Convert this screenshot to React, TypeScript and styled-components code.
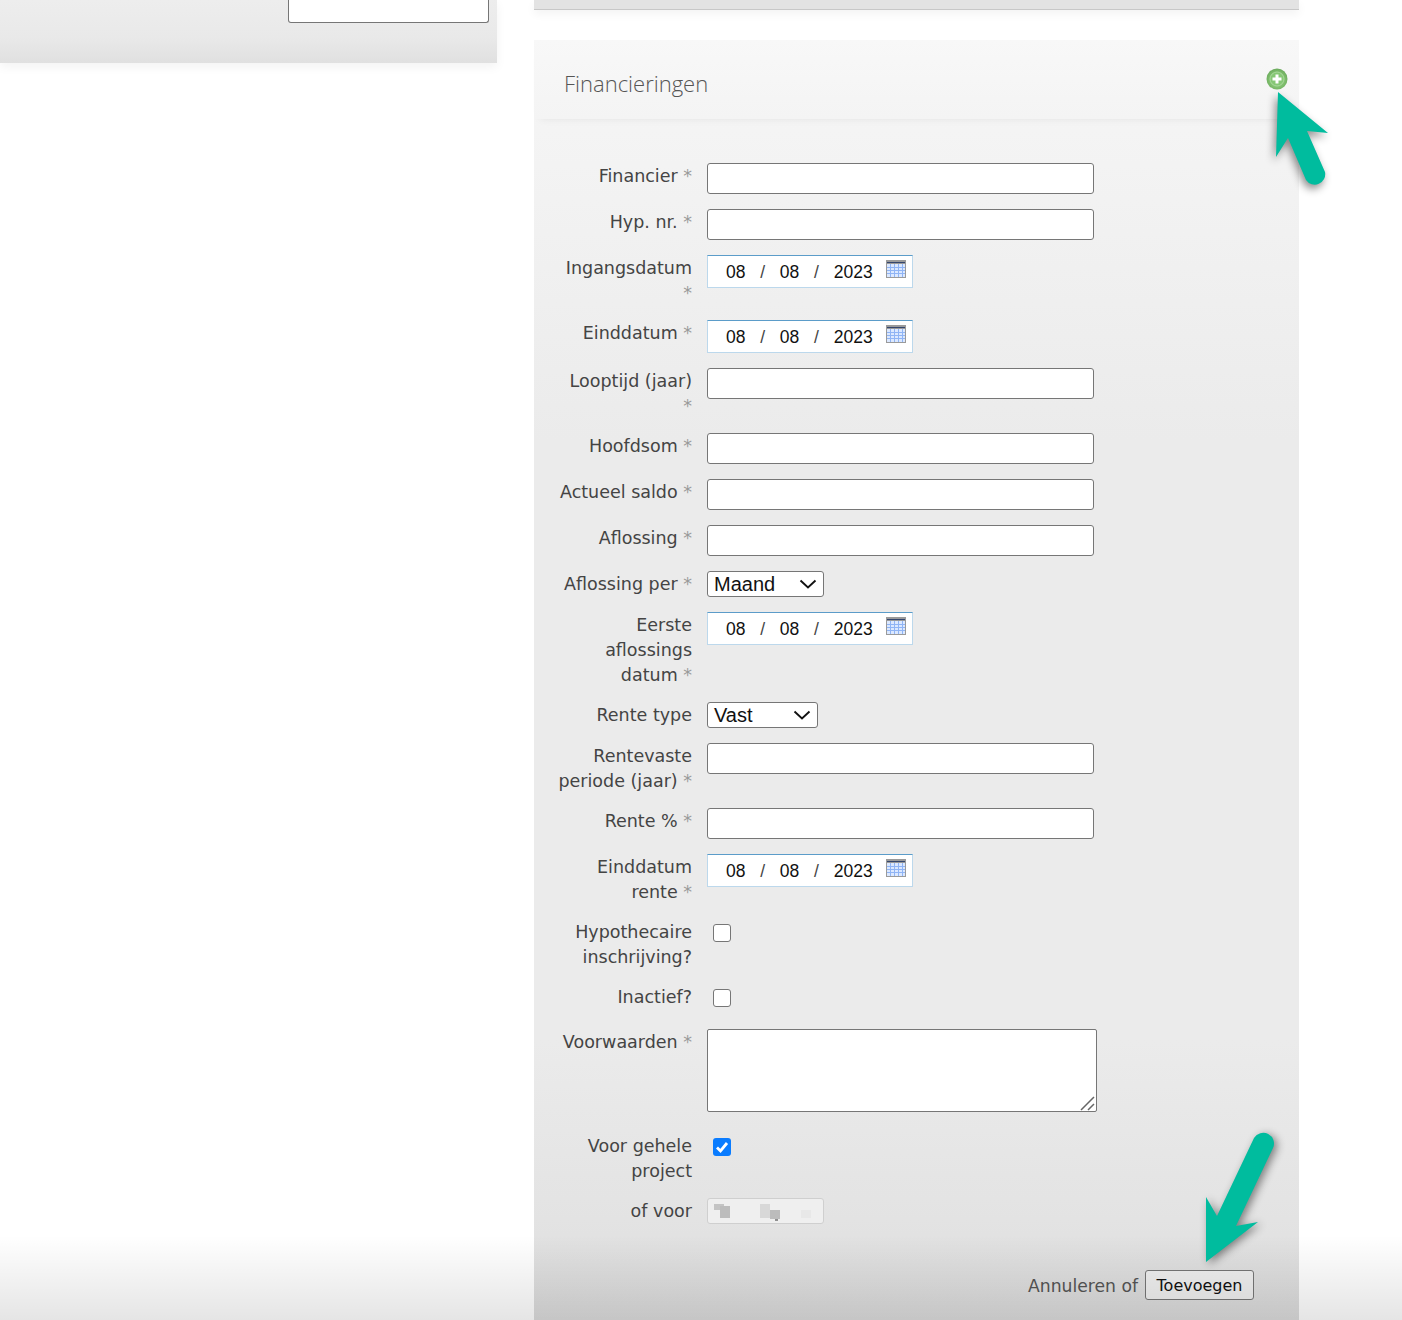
import React, { FC } from "react";
import styled, { createGlobalStyle } from "styled-components";

const GlobalStyle = createGlobalStyle`
    html, body {
        margin: 0;
        padding: 0;
        background: #fff;
        overflow: hidden;
    }
`;

type Field = {
    label: React.ReactNode;
    kind: "text" | "date" | "select" | "check" | "area" | "blurred";
    value?: string;
    width?: number;
    checked?: boolean;
};

const Star = () => <Req>*</Req>;

const fields: Field[] = [
    { label: <>Financier <Star /></>, kind: "text" },
    { label: <>Hyp. nr. <Star /></>, kind: "text" },
    { label: <>Ingangsdatum <Star /></>, kind: "date" },
    { label: <>Einddatum <Star /></>, kind: "date" },
    { label: <>Looptijd (jaar) <Star /></>, kind: "text" },
    { label: <>Hoofdsom <Star /></>, kind: "text" },
    { label: <>Actueel saldo <Star /></>, kind: "text" },
    { label: <>Aflossing <Star /></>, kind: "text" },
    { label: <>Aflossing per <Star /></>, kind: "select", value: "Maand", width: 117 },
    { label: <>Eerste aflossings datum <Star /></>, kind: "date" },
    { label: "Rente type", kind: "select", value: "Vast", width: 111 },
    { label: <>Rentevaste periode (jaar) <Star /></>, kind: "text" },
    { label: <>Rente % <Star /></>, kind: "text" },
    { label: <>Einddatum rente <Star /></>, kind: "date" },
    { label: "Hypothecaire inschrijving?", kind: "check" },
    { label: "Inactief?", kind: "check" },
    { label: <>Voorwaarden <Star /></>, kind: "area" },
    { label: "Voor gehele project", kind: "check", checked: true },
    { label: "of voor", kind: "blurred" },
];

const CalendarIcon: FC = () => (
    <svg width="20" height="18" viewBox="0 0 20 18">
        <rect x="0" y="0" width="20" height="18" fill="#9a9a9a" />
        <rect x="1" y="2" width="18" height="1" fill="#34466e" />
        <rect x="1" y="4" width="18" height="13" fill="#dbe8ff" />
        {[4, 8, 12, 16].map(x => <rect key={x} x={x} y="4" width="1" height="13" fill="#8fb4f5" />)}
        {[7, 10, 13].map(y => <rect key={y} x="1" y={y} width="18" height="1" fill="#8fb4f5" />)}
    </svg>
);

const DateField: FC = () => (
    <DateBox>
        <DatePart>08</DatePart>
        <Slash>/</Slash>
        <DatePart>08</DatePart>
        <Slash>/</Slash>
        <DatePart>2023</DatePart>
        <CalendarWrap><CalendarIcon /></CalendarWrap>
    </DateBox>
);

const Chevron: FC = () => (
    <svg width="18" height="10" viewBox="0 0 18 10" fill="none">
        <path d="M1.5 1.5L9 8.5L16.5 1.5" stroke="#111" strokeWidth="1.9" />
    </svg>
);

const renderControl = (f: Field) => {
    switch (f.kind) {
        case "text":
            return <TextBox />;
        case "date":
            return <DateField />;
        case "select":
            return (
                <SelectBox $width={f.width ?? 117}>
                    <span>{f.value}</span>
                    <Chevron />
                </SelectBox>
            );
        case "check":
            return (
                <CheckWrap>
                    <Check $checked={!!f.checked}>
                        {f.checked && (
                            <svg width="18" height="18" viewBox="0 0 18 18" fill="none">
                                <path d="M4 9.5L7.5 13L14 5" stroke="#fff" strokeWidth="2.8" />
                            </svg>
                        )}
                    </Check>
                </CheckWrap>
            );
        case "area":
            return (
                <AreaBox>
                    <svg width="16" height="16" viewBox="0 0 16 16" fill="none">
                        <path d="M1 15L14 2M8 15L14 9" stroke="#666" strokeWidth="1.5" />
                    </svg>
                </AreaBox>
            );
        case "blurred":
            return (
                <BlurBox>
                    <svg width="114" height="24" viewBox="0 0 114 24">
                        <rect x="6" y="5" width="10" height="6" fill="#c4c4c4" />
                        <rect x="12" y="7" width="10" height="12" fill="#bcbcbc" />
                        <rect x="52" y="5" width="10" height="14" fill="#d8d8d8" />
                        <rect x="62" y="11" width="10" height="9" fill="#bcbcbc" />
                        <rect x="67" y="20" width="3" height="2" fill="#909090" />
                        <rect x="93" y="11" width="10" height="8" fill="#e8e8e8" />
                    </svg>
                </BlurBox>
            );
    }
};

const App: FC = () => (
    <Page>
        <GlobalStyle />
        <LeftColumn>
            <SidePanel>
                <SideInput />
            </SidePanel>
        </LeftColumn>
        <RightColumn>
            <TopStrip />
            <Card>
                <CardHeader>
                    <Title>Financieringen</Title>
                    <AddButton>
                        <svg width="22" height="22" viewBox="0 0 22 22">
                            <defs>
                                <radialGradient id="addFill" cx="50%" cy="55%" r="55%">
                                    <stop offset="0%" stopColor="#a9d89a" />
                                    <stop offset="70%" stopColor="#7dbd6b" />
                                    <stop offset="100%" stopColor="#6aa95c" />
                                </radialGradient>
                            </defs>
                            <circle cx="11" cy="11" r="10.5" fill="url(#addFill)" />
                            <circle cx="11" cy="11" r="7" fill="#86c775" stroke="#a8d89c" strokeWidth="1" />
                            <path d="M9.5 6.5h3v3h3v3h-3v3h-3v-3h-3v-3h3z" fill="#fff" />
                        </svg>
                    </AddButton>
                </CardHeader>
                <FormBody>
                    {fields.map((f, i) => (
                        <FormRow key={i}>
                            <Label>{f.label}</Label>
                            <Control>{renderControl(f)}</Control>
                        </FormRow>
                    ))}
                </FormBody>
                <Footer>
                    <FooterText>Annuleren of</FooterText>
                    <SubmitButton>Toevoegen</SubmitButton>
                </Footer>
            </Card>
        </RightColumn>
        <BottomFade />
        <ArrowTop>
            <svg width="76" height="110" viewBox="0 0 76 110" fill="none">
                <path d="M5 1L55 42L34 40L52 81A10.5 10.5 0 0 1 33 89L15 47L3 66Z" fill="#00bc9e" />
            </svg>
        </ArrowTop>
        <ArrowBottom>
            <svg width="90" height="140" viewBox="0 0 90 140" fill="none">
                <path d="M64 6A10.75 10.75 0 0 1 83 16L46 94L68 90L16 130L16 65L27 84Z" fill="#00bc9e" />
            </svg>
        </ArrowBottom>
    </Page>
);

export default App;

const Page = styled.div`
    position: relative;
    width: 1402px;
    height: 1320px;
    overflow: hidden;
    display: flex;
    align-items: flex-start;
    background: #fff;
    font-family: "DejaVu Sans", sans-serif;
`;

const LeftColumn = styled.div`
    width: 497px;
    flex: none;
`;

const SidePanel = styled.div`
    height: 63px;
    display: flex;
    justify-content: flex-end;
    align-items: flex-start;
    padding-right: 8px;
    box-sizing: border-box;
    background: linear-gradient(#ededed 0%, #e9e9e9 60%, #e0e0e0 100%);
    box-shadow: 0 4px 10px rgba(0, 0, 0, 0.05);
`;

const SideInput = styled.div`
    width: 201px;
    height: 23px;
    box-sizing: border-box;
    background: #fff;
    border: 1px solid #767676;
    border-top: none;
    border-radius: 0 0 3px 3px;
`;

const RightColumn = styled.div`
    width: 765px;
    margin-left: 37px;
    flex: none;
    display: flex;
    flex-direction: column;
`;

const TopStrip = styled.div`
    height: 10px;
    box-sizing: border-box;
    background: #e3e3e3;
    border-bottom: 1px solid #c8c8c8;
    box-shadow: 0 4px 10px rgba(0, 0, 0, 0.05);
`;

const Card = styled.div`
    margin-top: 30px;
    height: 1280px;
    display: flex;
    flex-direction: column;
    background: linear-gradient(#f7f7f7 0px, #f4f4f4 90px, #ebebeb 400px, #ebebeb 1000px, #e3e3e3 1180px, #dcdcdc 1280px);
`;

const CardHeader = styled.div`
    position: relative;
    height: 79px;
    flex: none;
    box-sizing: border-box;
    padding: 28px 30px 0;
    box-shadow: 0 6px 8px -6px rgba(0, 0, 0, 0.07);
    background: linear-gradient(#f8f8f8, #f4f4f4);
`;

const Title = styled.h3`
    margin: 0;
    font-family: "Open Sans", sans-serif;
    font-weight: 300;
    font-size: 22px;
    line-height: 30px;
    color: #555;
`;

const AddButton = styled.div`
    position: absolute;
    left: 732px;
    top: 28px;
    width: 22px;
    height: 22px;
`;

const FormBody = styled.div`
    padding-top: 44px;
    display: flex;
    flex-direction: column;
`;

const FormRow = styled.div`
    display: grid;
    grid-template-columns: 135px 1fr;
    column-gap: 15px;
    padding-left: 23px;
    padding-bottom: 15px;
`;

const Label = styled.div`
    font-size: 17.5px;
    line-height: 25px;
    margin-top: 1px;
    margin-bottom: -1px;
    color: #444;
    text-align: right;
`;

const Req = styled.span`
    color: #999;
`;

const Control = styled.div`
    display: flex;
    align-items: flex-start;
`;

const TextBox = styled.div`
    width: 387px;
    height: 31px;
    box-sizing: border-box;
    background: #fff;
    border: 1px solid #767676;
    border-radius: 3px;
`;

const DateBox = styled.div`
    width: 206px;
    height: 33px;
    box-sizing: border-box;
    background: #fff;
    border: 1px solid #bcd8ec;
    border-top-color: #5b9cc9;
    display: flex;
    align-items: center;
    padding: 2px 6px 0 18px;
    font-family: "Liberation Sans", sans-serif;
    font-size: 17.5px;
    color: #111;
`;

const DatePart = styled.span`
    line-height: 29px;
`;

const Slash = styled.span`
    margin: 0 14.75px;
    color: #444;
`;

const CalendarWrap = styled.span`
    margin-left: auto;
    display: flex;
    align-self: flex-start;
    padding-top: 2px;
`;

const SelectBox = styled.div<{ $width: number }>`
    width: ${p => p.$width}px;
    height: 26px;
    box-sizing: border-box;
    background: #fff;
    border: 1px solid #767676;
    border-radius: 3px;
    display: flex;
    align-items: center;
    justify-content: space-between;
    padding: 0 6px 0 6px;
    font-family: "Liberation Sans", sans-serif;
    font-size: 20px;
    color: #111;
`;

const CheckWrap = styled.div`
    padding: 5px 0 7px 6px;
`;

const Check = styled.div<{ $checked: boolean }>`
    width: 18px;
    height: 18px;
    box-sizing: border-box;
    border-radius: 3px;
    background: ${p => (p.$checked ? "#0a7cff" : "#fff")};
    border: ${p => (p.$checked ? "none" : "1px solid #767676")};
`;

const AreaBox = styled.div`
    width: 390px;
    height: 83px;
    margin-bottom: 6px;
    box-sizing: border-box;
    background: #fff;
    border: 1px solid #767676;
    border-radius: 2px;
    display: flex;
    align-items: flex-end;
    justify-content: flex-end;
`;

const BlurBox = styled.div`
    width: 117px;
    height: 26px;
    box-sizing: border-box;
    background: #efefef;
    border: 1px solid #cfcfcf;
    border-radius: 3px;
    overflow: hidden;
`;

const Footer = styled.div`
    margin-top: 31px;
    padding-right: 45px;
    display: flex;
    justify-content: flex-end;
    align-items: center;
    gap: 7px;
`;

const FooterText = styled.span`
    font-size: 17.2px;
    padding-top: 2px;
    color: #555;
`;

const SubmitButton = styled.div`
    width: 109px;
    height: 30px;
    box-sizing: border-box;
    border: 1px solid #767676;
    border-radius: 3px;
    background: #efefef;
    display: flex;
    align-items: center;
    justify-content: center;
    font-size: 16px;
    color: #111;
`;

const BottomFade = styled.div`
    position: absolute;
    left: 0;
    right: 0;
    bottom: 0;
    height: 85px;
    pointer-events: none;
    background: linear-gradient(rgba(0, 0, 0, 0), rgba(0, 0, 0, 0.1));
`;

const ArrowTop = styled.div`
    position: absolute;
    left: 1273px;
    top: 91px;
    filter: drop-shadow(-2px 4px 4px rgba(0, 0, 0, 0.45));
`;

const ArrowBottom = styled.div`
    position: absolute;
    left: 1190px;
    top: 1132px;
    filter: drop-shadow(3px 2px 4px rgba(0, 0, 0, 0.45));
`;
